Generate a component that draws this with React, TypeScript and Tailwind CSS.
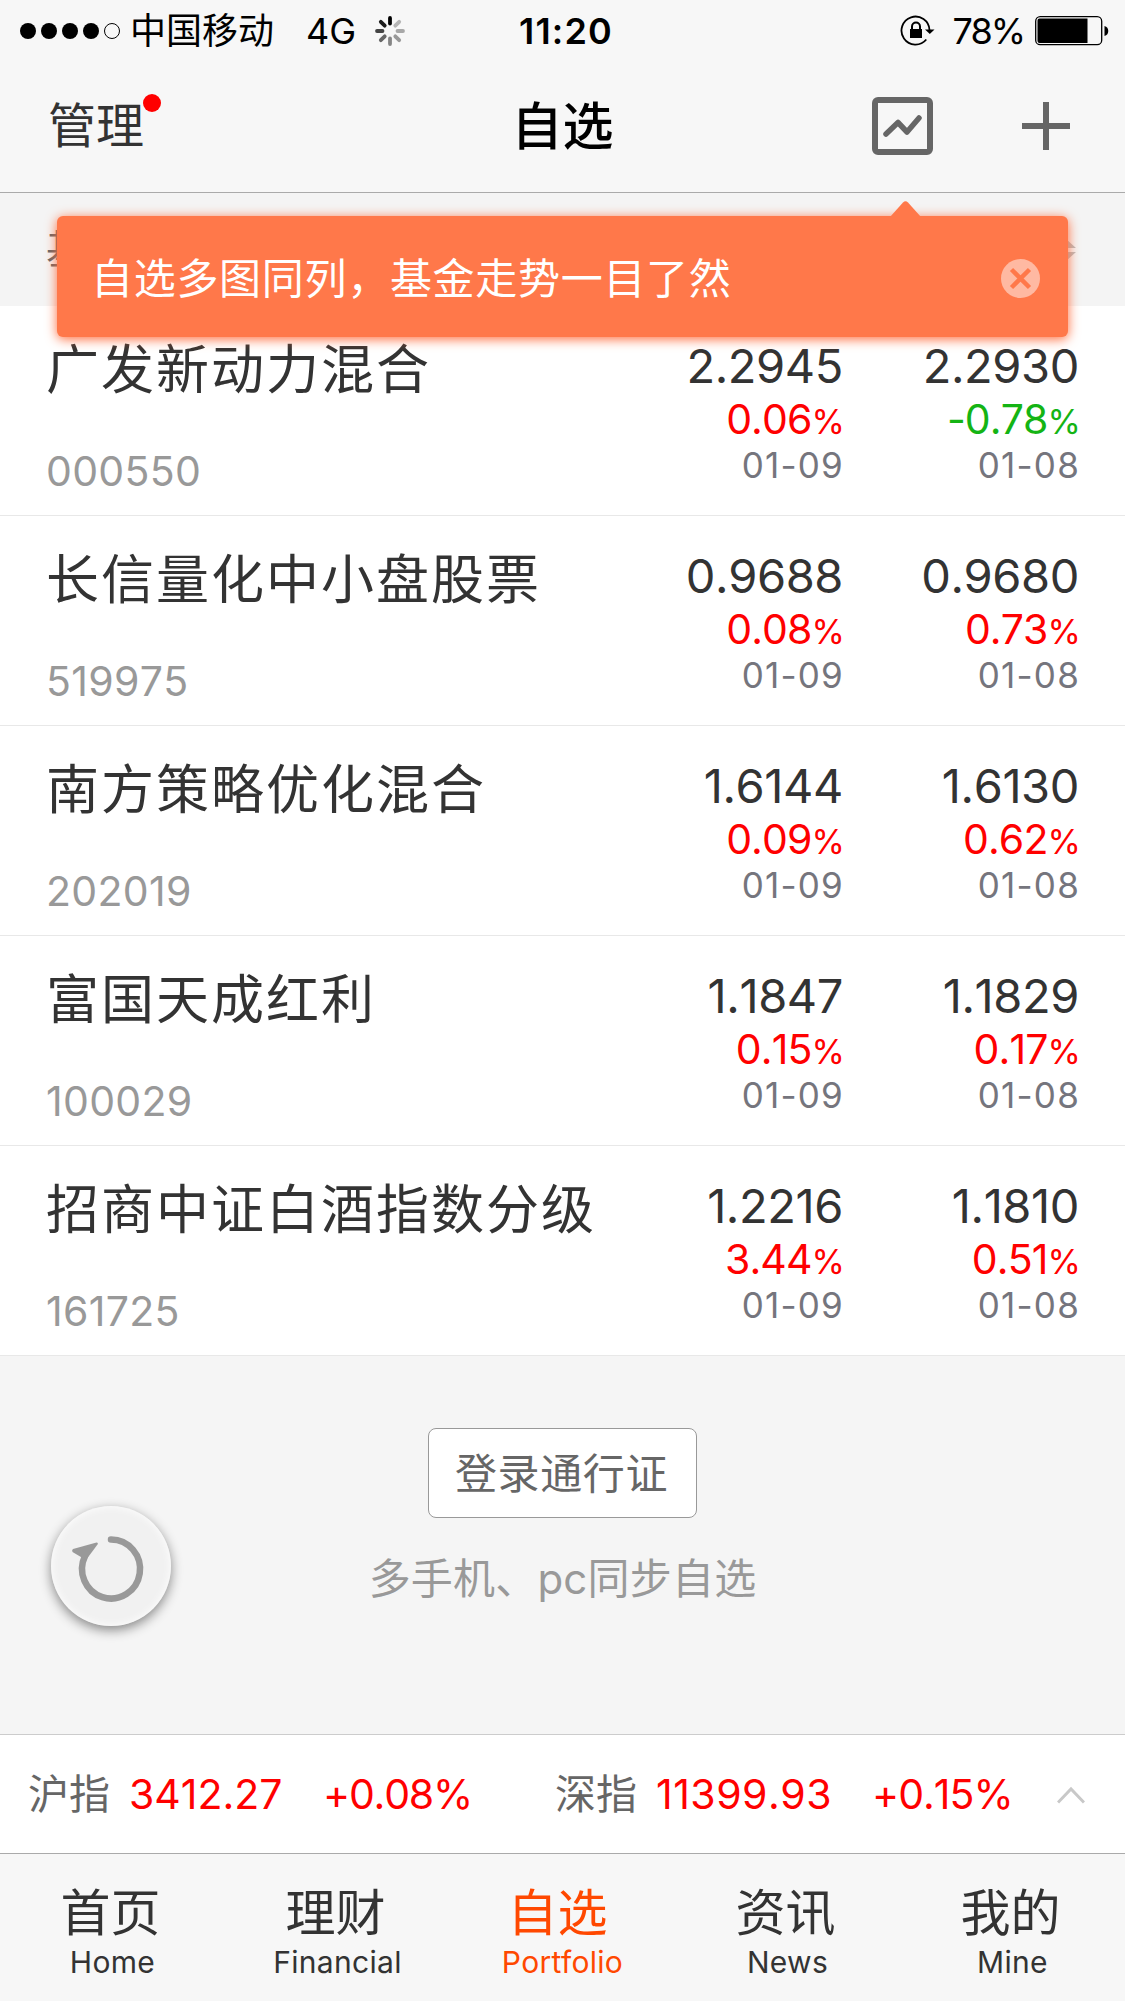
import React from 'react';

type Quote = { value: string; change: string; date: string };

type Fund = { name: string; code: string; quotes: Quote[] };

const funds: Fund[] = [
  {
    name: '广发新动力混合',
    code: '000550',
    quotes: [
      { value: '2.2945', change: '0.06', date: '01-09' },
      { value: '2.2930', change: '-0.78', date: '01-08' },
    ],
  },
  {
    name: '长信量化中小盘股票',
    code: '519975',
    quotes: [
      { value: '0.9688', change: '0.08', date: '01-09' },
      { value: '0.9680', change: '0.73', date: '01-08' },
    ],
  },
  {
    name: '南方策略优化混合',
    code: '202019',
    quotes: [
      { value: '1.6144', change: '0.09', date: '01-09' },
      { value: '1.6130', change: '0.62', date: '01-08' },
    ],
  },
  {
    name: '富国天成红利',
    code: '100029',
    quotes: [
      { value: '1.1847', change: '0.15', date: '01-09' },
      { value: '1.1829', change: '0.17', date: '01-08' },
    ],
  },
  {
    name: '招商中证白酒指数分级',
    code: '161725',
    quotes: [
      { value: '1.2216', change: '3.44', date: '01-09' },
      { value: '1.1810', change: '0.51', date: '01-08' },
    ],
  },
];

const tabs = [
  { label: '首页', sub: 'Home' },
  { label: '理财', sub: 'Financial' },
  { label: '自选', sub: 'Portfolio', active: true },
  { label: '资讯', sub: 'News' },
  { label: '我的', sub: 'Mine' },
];

const spokes = ['#000', '#b5b5b5', '#a8a8a8', '#999', '#858585', '#666', '#444', '#1c1c1c'];

const StatusBar: React.FC = () => (
  <div className="flex h-[62px] items-center pl-5 pr-4 text-[36px] leading-none text-black">
    <div className="flex flex-1 items-center">
      <div className="flex gap-[5px]">
        {[0, 1, 2, 3].map((i) => (
          <span key={i} className="h-4 w-4 rounded-full bg-black" />
        ))}
        <span className="h-4 w-4 rounded-full border border-black" />
      </div>
      <span className="ml-[10px]">中国移动</span>
      <span className="ml-[32px]">4G</span>
      <svg className="ml-[19px]" width="30" height="30" viewBox="-15 -15 30 30">
        {spokes.map((color, i) => (
          <line
            key={i}
            x1="0"
            y1="-7.5"
            x2="0"
            y2="-13"
            stroke={color}
            strokeWidth="3.8"
            strokeLinecap="round"
            transform={`rotate(${i * 45})`}
          />
        ))}
      </svg>
    </div>
    <span className="pl-[3px] font-semibold tracking-[1.2px]">11:20</span>
    <div className="flex flex-1 items-center justify-end">
      <svg width="36" height="32" viewBox="0 0 36 32" fill="none">
        <path d="M29.5 15a14 14 0 1 0-3.2 9.5" stroke="#000" strokeWidth="1.8" />
        <path d="M25 14.5h9.5L29.8 19z" fill="#000" />
        <path d="M10 14h12v9H10z" fill="#000" />
        <path d="M12 15v-3.5a4 4 0 0 1 8 0V15" stroke="#000" strokeWidth="2" />
      </svg>
      <span className="ml-[17px] tracking-[-2px]">78%</span>
      <svg className="ml-[11px]" width="74" height="30" viewBox="0 0 74 30">
        <rect x="0.7" y="0.7" width="66" height="28" rx="4.5" fill="none" stroke="#000" strokeWidth="1.3" />
        <path d="M4.5 2.5H52.5V27H4.5a2 2 0 0 1-2-2V4.5a2 2 0 0 1 2-2z" fill="#000" />
        <path d="M69.5 10c5 1 5 9 0 10z" fill="#000" />
      </svg>
    </div>
  </div>
);

const NavBar: React.FC = () => (
  <div className="flex h-[130px] items-center pb-[3px] pl-12 pr-[54px]">
    <div className="flex flex-1">
      <span className="relative text-[48px] leading-none text-[#333]">
        管理
        <span className="absolute -right-[17px] -top-2 h-[18px] w-[18px] rounded-full bg-[#f00]" />
      </span>
    </div>
    <h1 className="pl-[6px] pt-px text-[51px] font-medium leading-none text-black">自选</h1>
    <div className="flex flex-1 items-center justify-end gap-[88px]">
      <svg width="61" height="58" viewBox="0 0 61 58" fill="none" stroke="#666">
        <rect x="3" y="3" width="55" height="52" rx="3" strokeWidth="6" />
        <path d="M14 37l12-11.5 9 9.5 12-14" strokeWidth="5.5" strokeLinecap="round" strokeLinejoin="round" />
      </svg>
      <svg width="50" height="50" viewBox="0 0 50 50" fill="none" stroke="#666" strokeWidth="6">
        <path d="M25 1v48M1 25h48" />
      </svg>
    </div>
  </div>
);

const Tooltip: React.FC = () => (
  <div className="absolute left-[57px] top-[23px] flex h-[121px] w-[1011px] items-center justify-between rounded-md bg-[#ff784a] pl-[34px] pr-[28px] pt-[3px] shadow-[0_2px_12px_#ff6a3a]">
    <svg className="absolute -top-[15px] left-[833px]" width="31" height="16" viewBox="0 0 31 16">
      <path d="M0 16L13 1.5q2.5-2.5 5 0L31 16z" fill="#ff784a" />
    </svg>
    <span className="pt-px text-[42px] leading-none tracking-[0.7px] text-white">自选多图同列，基金走势一目了然</span>
    <svg width="39" height="39" viewBox="0 0 39 39">
      <circle cx="19.5" cy="19.5" r="19.5" fill="#ffb9a2" />
      <path d="M10.5 10.5l18 18M28.5 10.5l-18 18" stroke="#ff784a" strokeWidth="4.5" />
    </svg>
  </div>
);

const ListHeader: React.FC = () => (
  <div className="relative flex h-[113px] items-center justify-between bg-[#f4f4f4] pl-[46px] pr-[49px]">
    <span className="text-[40px] leading-none text-[#666]">基</span>
    <svg width="20" height="22" viewBox="0 0 20 22" fill="#bbb">
      <path d="M10 0l10 9H0zM10 22L0 13h20z" />
    </svg>
    <Tooltip />
  </div>
);

const QuoteCell: React.FC<{ quote: Quote }> = ({ quote }) => (
  <div className="flex w-[236px] flex-col items-end">
    <span className="text-[47px] leading-[61px] tracking-[-0.4px] text-[#333]">{quote.value}</span>
    <span
      className={
        quote.change.startsWith('-')
          ? 'mr-[-1px] text-[41px] leading-[46px] tracking-[-0.9px] text-[#14b414]'
          : 'mr-[-1px] text-[41px] leading-[46px] tracking-[-0.9px] text-[#f00]'
      }
    >
      {quote.change}
      <span className="text-[34px]">%</span>
    </span>
    <span className="-mt-[2px] mr-[-1px] text-[35px] leading-[45px] tracking-[1.2px] text-[#75757d]">{quote.date}</span>
  </div>
);

const FundRow: React.FC<{ fund: Fund }> = ({ fund }) => (
  <div className="flex h-[210px] justify-between border-b border-[#e8e8e8] bg-white pl-[46px] pr-[46px] [font-kerning:none]">
    <div className="flex flex-col pt-[35px]">
      <span className="text-[53px] leading-[58px] tracking-[2px] text-[#333]">{fund.name}</span>
      <span className="mt-[47px] text-[41px] leading-[50px] tracking-[0.3px] text-[#999]">{fund.code}</span>
    </div>
    <div className="flex pt-[29px]">
      {fund.quotes.map((quote) => (
        <QuoteCell key={quote.date} quote={quote} />
      ))}
    </div>
  </div>
);

const LoginPanel: React.FC = () => (
  <div className="relative flex flex-1 flex-col items-center bg-[#f5f5f5] pt-[72px]">
    <button className="h-[90px] w-[269px] rounded-lg border border-[#999] bg-white pr-[2px] pt-px text-[42px] leading-none tracking-[0.6px] text-[#666]">
      登录通行证
    </button>
    <p className="mt-[39px] text-[42px] leading-[44px] tracking-[0.2px] text-[#999]">多手机、pc同步自选</p>
    <div className="absolute left-[51px] top-[150px] flex h-[120px] w-[120px] items-center justify-center rounded-full bg-[#f1f1f1] shadow-[0_4px_12px_rgba(0,0,0,0.45),inset_0_0_10px_#fff]">
      <svg width="120" height="120" viewBox="0 0 120 120" fill="none">
        <path d="M60 33.5a29 29.5 0 1 1-26 16.5" stroke="#999" strokeWidth="6.5" strokeLinecap="round" />
        <path d="M22 43L45.5 36.5q2 0 1 2L35 54 21.5 46q-1-2 .5-3z" fill="#999" />
      </svg>
    </div>
  </div>
);

const IndexBar: React.FC = () => (
  <div className="flex h-[119px] items-center border-t border-[#ccc] bg-white pl-[28px] text-[41px] leading-none text-[#f00] [font-kerning:none]">
    <span className="w-[101px] text-[#666]">沪指</span>
    <span className="w-[194px]">3412.27</span>
    <span className="w-[232px] tracking-[-1.2px]">+0.08%</span>
    <span className="w-[101px] text-[#666]">深指</span>
    <span className="w-[216px] tracking-[0.5px]">11399.93</span>
    <span className="w-[185px] tracking-[-1px]">+0.15%</span>
    <svg className="mt-[2px]" width="28" height="18" viewBox="0 0 28 18" fill="none" stroke="#c8c8c8" strokeWidth="3">
      <path d="M1 16.5L14 3l13 13.5" />
    </svg>
  </div>
);

const TabBar: React.FC = () => (
  <div className="grid h-[148px] grid-cols-5 border-t border-[#aaa] bg-[#f7f7f7] pt-[31px]">
    {tabs.map((tab) => (
      <div
        key={tab.sub}
        className={
          tab.active ? 'flex flex-col items-center text-[#ff4800]' : 'flex flex-col items-center text-[#333]'
        }
      >
        <span className={tab.active ? 'pr-[10px] text-[50px] leading-[56px]' : 'pr-[4px] text-[50px] leading-[56px]'}>
          {tab.label}
        </span>
        <span className="mt-1 text-[30px] leading-[35px] tracking-[0.3px]">{tab.sub}</span>
      </div>
    ))}
  </div>
);

const App: React.FC = () => {
  return (
    <div className="flex h-[2001px] w-[1125px] flex-col overflow-hidden bg-[#f4f4f4] font-['Inter','Noto_Sans_CJK_SC',sans-serif]">
      <header className="h-[193px] border-b border-[#aaa] bg-[#f7f7f7]">
        <StatusBar />
        <NavBar />
      </header>
      <ListHeader />
      <div>
        {funds.map((fund) => (
          <FundRow key={fund.code} fund={fund} />
        ))}
      </div>
      <LoginPanel />
      <IndexBar />
      <TabBar />
    </div>
  );
};

export default App;
